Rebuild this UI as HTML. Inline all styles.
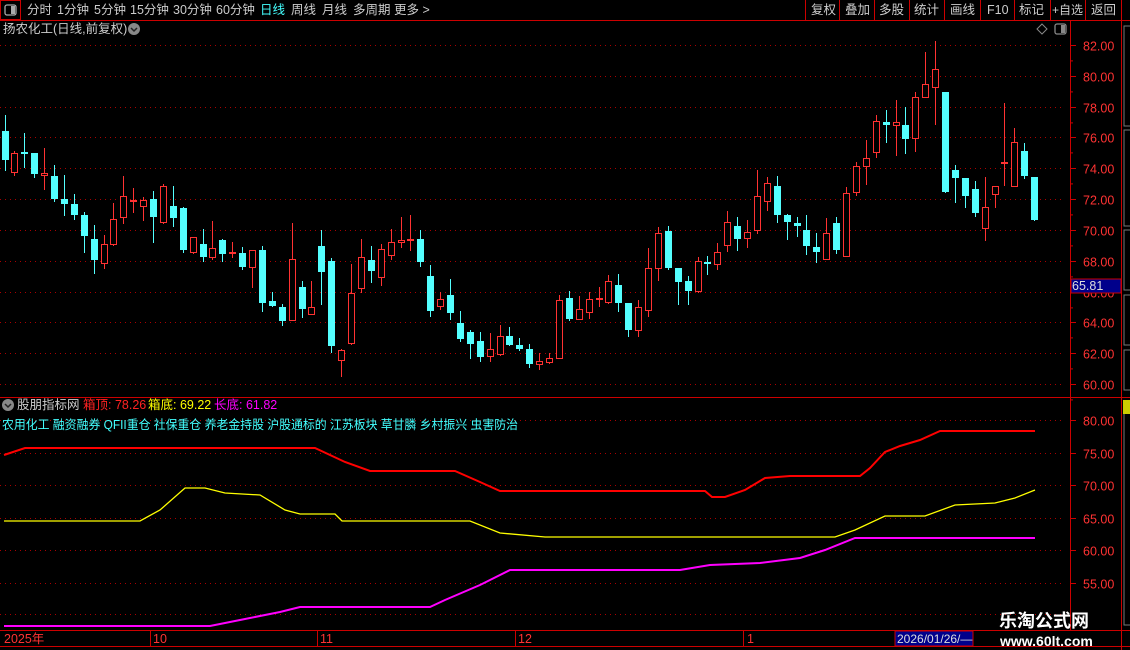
<!DOCTYPE html>
<html><head><meta charset="utf-8"><style>
body{margin:0;width:1130px;height:650px;background:#000;overflow:hidden;font-family:"Liberation Sans","Noto Sans CJK SC",sans-serif;}
svg{position:absolute;left:0;top:0}
text{font-family:"Liberation Sans","Noto Sans CJK SC",sans-serif;}
</style></head><body>
<svg id="s" width="1130" height="650" xmlns="http://www.w3.org/2000/svg">
<rect x="0.5" y="0.5" width="20" height="19" fill="none" stroke="#c00"/>
<rect x="5" y="5" width="11" height="10" rx="2" fill="none" stroke="#aaa" stroke-width="1.3"/><rect x="11" y="6" width="4" height="8" fill="#aaa"/>
<line x1="0" y1="20.5" x2="1130" y2="20.5" stroke="#c00"/>
<g font-size="12.5" fill="#ccc">
<text x="27" y="14">分时</text><text x="57" y="14">1分钟</text><text x="94" y="14">5分钟</text><text x="130" y="14">15分钟</text><text x="173" y="14">30分钟</text><text x="216" y="14">60分钟</text>
<text x="260" y="14" fill="#4ff">日线</text><text x="291" y="14">周线</text><text x="322" y="14">月线</text><text x="353" y="14">多周期</text><text x="394" y="14">更多 &gt;</text>
<text x="811" y="14">复权</text><text x="845" y="14">叠加</text><text x="879" y="14">多股</text><text x="914" y="14">统计</text><text x="950" y="14">画线</text><text x="987" y="14">F10</text><text x="1019" y="14">标记</text><text x="1052" y="14" font-size="12">+自选</text><text x="1091" y="14">返回</text>
</g>
<g stroke="#c00"><line x1="805.5" y1="0" x2="805.5" y2="20"/><line x1="839.5" y1="0" x2="839.5" y2="20"/><line x1="874.5" y1="0" x2="874.5" y2="20"/><line x1="909.5" y1="0" x2="909.5" y2="20"/><line x1="944.5" y1="0" x2="944.5" y2="20"/><line x1="980.5" y1="0" x2="980.5" y2="20"/><line x1="1014.5" y1="0" x2="1014.5" y2="20"/><line x1="1050.5" y1="0" x2="1050.5" y2="20"/><line x1="1085.5" y1="0" x2="1085.5" y2="20"/><line x1="1121.5" y1="0" x2="1121.5" y2="20"/></g>
<text x="3" y="33" font-size="12.5" fill="#ccc">扬农化工(日线,前复权)</text>
<circle cx="134" cy="29" r="6" fill="#888"/><path d="M131 28 l3 3 l3 -3" stroke="#222" stroke-width="1.5" fill="none"/>
<path d="M1042 24 l5 5 l-5 5 l-5 -5z" fill="none" stroke="#888"/>
<rect x="1055" y="24" width="11" height="10" rx="2" fill="none" stroke="#888" stroke-width="1.3"/><rect x="1061" y="25" width="4" height="8" fill="#888"/>
<line x1="1070.5" y1="20" x2="1070.5" y2="630" stroke="#c00"/>
<line x1="1121.5" y1="20" x2="1121.5" y2="650" stroke="#c00"/>
<line x1="0" y1="397.5" x2="1130" y2="397.5" stroke="#c00"/>
<line x1="0" y1="630.5" x2="1130" y2="630.5" stroke="#c00"/>
<line x1="0" y1="646.5" x2="1130" y2="646.5" stroke="#c00"/>
<g id="grid"></g>
<g font-size="12.5" fill="#f33" id="ax"></g>
<rect x="1071" y="279" width="50" height="14" fill="#00008b" stroke="#c00"/>
<text x="1072" y="290" font-size="12.5" fill="#ddd">65.81</text>
<g stroke="#777" fill="none"><rect x="1124" y="26" width="8" height="100"/><rect x="1124" y="130" width="8" height="96"/><rect x="1124" y="230" width="8" height="60"/><rect x="1124" y="295" width="8" height="50"/><rect x="1124" y="350" width="8" height="40"/><rect x="1124" y="405" width="8" height="220"/></g>
<rect x="1123" y="400" width="7" height="14" fill="#cc0"/>
<g id="cd"></g>
<circle cx="8" cy="405" r="6" fill="#888"/><path d="M5 404 l3 3 l3 -3" stroke="#222" stroke-width="1.5" fill="none"/>
<text x="17" y="409" font-size="12.5" fill="#ccc">股朋指标网</text>
<text x="83" y="409" font-size="12.5" fill="#f22">箱顶: 78.26</text>
<text x="148" y="409" font-size="12.5" fill="#ff0">箱底: 69.22</text>
<text x="214" y="409" font-size="12.5" fill="#f0f">长底: 61.82</text>
<text x="2" y="429" font-size="12.5" fill="#4ff" textLength="516" lengthAdjust="spacingAndGlyphs">农用化工 融资融券 QFII重仓 社保重仓 养老金持股 沪股通标的 江苏板块 草甘膦 乡村振兴 虫害防治</text>
<g fill="none" stroke-width="2">
<polyline stroke="#f00" points="4,455 25,448 315,448 345,462 370,471 455,471 480,482 500,491 705,491 712,497 725,497 745,490 765,478 790,476 860,476 870,468 885,452 900,446 920,440 940,431 1035,431"/>
<polyline stroke="#ff0" stroke-width="1.3" points="4,521 140,521 160,510 185,488 205,488 225,493 260,495 285,510 300,514 335,514 342,521 470,521 500,533 545,537 835,537 855,530 885,516 925,516 955,505 995,503 1015,498 1035,490"/>
<polyline stroke="#f0f" points="4,626 210,626 240,620 280,612 300,607 430,607 445,600 480,585 510,570 680,570 710,565 760,563 800,558 825,550 855,538 1035,538"/>
</g>
<g font-size="12.5" fill="#f33"><text x="4" y="643">2025年</text><text x="153" y="643">10</text><text x="320" y="643">11</text><text x="518" y="643">12</text><text x="747" y="643">1</text></g>
<g stroke="#c00"><line x1="150.5" y1="630" x2="150.5" y2="646"/><line x1="317.5" y1="630" x2="317.5" y2="646"/><line x1="515.5" y1="630" x2="515.5" y2="646"/><line x1="743.5" y1="630" x2="743.5" y2="646"/></g>
<rect x="895" y="631" width="78" height="15" fill="#00008b" stroke="#c00"/>
<text x="897" y="643" font-size="12" fill="#ddd">2026/01/26/—</text>
<text x="999" y="627" font-size="18" font-weight="bold" fill="#fff" font-family="Noto Serif CJK SC,serif">乐淘公式网</text>
<text x="1000" y="646" font-size="14" font-weight="bold" fill="#fff" font-family="Liberation Serif,serif">www.60lt.com</text>
</svg>
<script>
var ns="http://www.w3.org/2000/svg";
function el(p,t,a){var e=document.createElementNS(ns,t);for(var k in a)e.setAttribute(k,a[k]);p.appendChild(e);return e;}
var g=document.getElementById('grid'),ax=document.getElementById('ax');
for(var i=0;i<12;i++){var y=Math.round(45+i*30.82)+0.5;el(g,'line',{x1:0,x2:1062,y1:y,y2:y,stroke:'#a00','stroke-dasharray':'1 4'});el(g,'line',{x1:1070,x2:1076,y1:y,y2:y,stroke:'#c00'});var t=el(ax,'text',{x:1083,y:y+5});t.textContent=(82-2*i).toFixed(2);
 el(g,'line',{x1:1070,x2:1073,y1:y+15.4,y2:y+15.4,stroke:'#c00'});}
for(var i=0;i<6;i++){var y=Math.round(420+i*32.5)+0.5;el(g,'line',{x1:0,x2:1062,y1:y,y2:y,stroke:'#a00','stroke-dasharray':'1 4'});el(g,'line',{x1:1070,x2:1076,y1:y,y2:y,stroke:'#c00'});var t=el(ax,'text',{x:1083,y:y+5});t.textContent=(80-5*i).toFixed(2);}
el(g,'line',{x1:0,x2:1062,y1:614.5,y2:614.5,stroke:'#a00','stroke-dasharray':'1 4'});
var D="c 131 160 115 171|r 153 173 151 176|c 152 154 133 168|c 153 174 153 178|r 173 176 148 190|c 176 199 165 202|c 199 204 175 216|c 204 215 194 220|c 215 236 212 253|c 239 260 225 274|r 244 264 235 269|r 219 245 203 246|r 196 218 176 224|r 200 202 188 213|r 200 207 197 221|c 199 217 191 243|r 186 223 184 224|c 206 218 186 227|c 208 250 207 253|r 237 253 237 254|c 244 257 229 262|r 248 258 221 260|c 240 254 239 262|r 252 254 242 258|c 253 267 247 270|r 250 268 250 288|c 250 303 246 312|c 301 306 292 307|c 307 321 304 326|r 259 321 223 321|c 287 309 281 318|r 307 315 281 315|c 246 272 230 305|c 261 346 258 353|r 350 361 349 377|r 293 344 264 345|r 257 289 239 293|c 260 271 246 283|r 249 278 244 286|r 242 256 229 260|r 240 243 217 248|r 239 241 215 251|c 239 262 230 267|c 276 311 265 317|r 299 307 292 310|c 295 313 279 320|c 323 339 311 342|c 332 344 330 359|c 341 357 332 362|r 349 357 333 362|r 336 355 325 356|c 336 345 327 346|c 345 349 338 351|c 349 364 344 368|r 361 365 353 370|r 358 363 353 364|r 300 359 295 359|c 298 319 291 321|r 309 320 296 320|r 299 313 292 319|r 298 300 287 307|r 281 303 275 304|c 285 303 274 312|c 303 330 303 337|r 307 331 300 337|r 268 311 248 317|r 233 269 227 281|c 231 268 226 270|c 268 282 268 305|c 281 291 276 305|r 261 292 257 293|c 262 264 256 275|r 252 265 243 270|r 222 246 211 252|c 226 239 217 251|r 232 239 220 248|r 196 231 170 234|r 183 202 177 211|c 186 215 176 223|c 215 222 214 240|c 223 226 217 237|c 230 246 215 255|c 247 252 233 263|r 233 260 218 260|c 223 250 217 254|r 193 257 187 257|r 166 193 162 196|r 158 167 140 185|r 121 153 115 158|c 122 125 110 143|r 122 126 100 156|c 125 139 107 154|r 97 139 92 152|r 84 98 52 98|r 69 88 41 125|c 92 192 92 193|c 170 178 165 203|c 178 196 178 208|c 189 213 181 217|r 207 229 177 241|r 186 195 186 208|r 162 164 103 186|r 142 187 128 187|c 151 176 143 179|c 177 220 177 221".split('|');
var cd=document.getElementById('cd');
D.forEach(function(s,i){var a=s.split(' ');var t=+a[1],b=+a[2],h=+a[3],l=+a[4];var x=Math.round(4.5+i*9.9);var col=a[0]=='c'?'#54ffff':'#ff3232';
 el(cd,'line',{x1:x+0.5,x2:x+0.5,y1:h,y2:l,stroke:col});
 if(b-t<3){el(cd,'rect',{x:x-3,y:t,width:7,height:2,fill:col});}
 else if(a[0]=='c'){el(cd,'rect',{x:x-3,y:t,width:7,height:b-t,fill:col});}
 else{el(cd,'rect',{x:x-2.5,y:t+0.5,width:6,height:b-t-1,fill:'#000',stroke:col});}
});
</script>
</body></html>
